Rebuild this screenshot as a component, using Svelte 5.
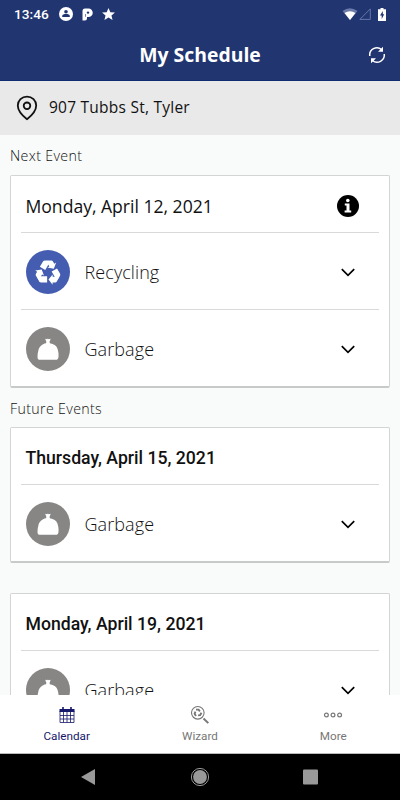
<script lang="ts">
	type Kind = 'recycling' | 'garbage';

	const sections: {
		title?: string;
		date: string;
		next?: boolean;
		pickups: { kind: Kind; label: string }[];
	}[] = [
		{
			title: 'Next Event',
			date: 'Monday, April 12, 2021',
			next: true,
			pickups: [
				{ kind: 'recycling', label: 'Recycling' },
				{ kind: 'garbage', label: 'Garbage' }
			]
		},
		{
			title: 'Future Events',
			date: 'Thursday, April 15, 2021',
			pickups: [{ kind: 'garbage', label: 'Garbage' }]
		},
		{
			date: 'Monday, April 19, 2021',
			pickups: [{ kind: 'garbage', label: 'Garbage' }]
		}
	];

	const tabs = ['Calendar', 'Wizard', 'More'];
	let active = $state('Calendar');
</script>

<div class="screen">
	<header>
		<div class="status">
			<span class="time">13:46</span>
			<svg class="person" viewBox="0 0 14 14" width="14" height="14">
				<circle cx="7" cy="7" r="7" fill="#fff" />
				<circle cx="7" cy="4.8" r="1.8" fill="#213571" />
				<path d="M3.2 10V9C3.2 7.5 5 7 7 7s3.800.5 3.800 2v1z" fill="#213571" />
			</svg>
			<svg class="parking" viewBox="0 0 11 13" width="11" height="13">
				<path
					d="M.5 6V3Q.5.500 3 .5H6.500A4.200 4.200 0 0 1 6.500 9H5V10.500A2 2 0 0 1 3 12.500H.5z"
					fill="#fff"
				/>
				<path d="M3.500 8.800V6" fill="none" stroke="#213571" stroke-width=".6" />
				<circle cx="6" cy="4.600" r="1.200" fill="#213571" />
			</svg>
			<svg class="star" viewBox="0 0 14 13" width="13" height="12">
				<path d="M7 0l2 4.500 5 .4-3.800 3.200L11.400 13 7 10.400 2.600 13l1.200-4.900L0 4.900l5-.4z" fill="#fff" />
			</svg>
			<span class="spacer"></span>
			<svg class="wifi" viewBox="0 0 16 12" width="16" height="12">
				<path d="M.5 3Q8-2.600 15.500 3L8 12z" fill="#6b7aa6" />
				<path d="M2.500 5Q8 1.300 13.500 5L8 12z" fill="#fff" />
			</svg>
			<svg class="signal" viewBox="0 0 12 12" width="12" height="12">
				<path d="M11.300.9v10.500H.9z" fill="none" stroke="#6577a8" />
			</svg>
			<svg class="battery" viewBox="0 0 8 13" width="8" height="13">
				<path d="M2.500 0h3v1.200H8V13H0V1.200h2.500z" fill="#fff" />
				<path d="M4.800 3L2 7.500h1.700V11L6.200 6.300H4.800z" fill="#213571" />
			</svg>
		</div>
		<div class="bar">
			<h1>My Schedule</h1>
			<button class="refresh" aria-label="Refresh">
				<svg viewBox="0 0 18 18" width="18" height="18">
					<g fill="none" stroke="#fff" stroke-width="1.500">
						<path d="M1.800 10A7.200 7.200 0 0 1 13.600 3.500" />
						<path d="M16.200 8A7.200 7.200 0 0 1 4.400 14.500" />
					</g>
					<path d="M15 .8v5h-5zM3 17.200v-5h5z" fill="#fff" />
				</svg>
			</button>
		</div>
	</header>

	<div class="address">
		<svg viewBox="0 0 22 26" width="22" height="26">
			<path
				d="M11 24.200C7.500 21.500 1.800 16.500 1.800 10.500a9.200 8.900 0 0 1 18.400 0c0 6-5.700 11-9.200 13.700z"
				fill="none"
				stroke="#111"
				stroke-width="1.800"
			/>
			<circle cx="11" cy="10.800" r="3.300" fill="none" stroke="#111" stroke-width="1.800" />
		</svg>
		<span>907 Tubbs St, Tyler</span>
	</div>

	<main>
		{#each sections as section}
			{#if section.title}
				<h2>{section.title}</h2>
			{:else}
				<div class="gap"></div>
			{/if}
			<section class="card" class:next={section.next}>
				<div class="date">
					<h3>{section.date}</h3>
					{#if section.next}
						<svg class="info" viewBox="0 0 22 22" width="22" height="22">
							<circle cx="11" cy="11" r="11" fill="#000" />
							<circle cx="10.800" cy="5.500" r="1.800" fill="#fff" />
							<path d="M7.800 8.500h4.700v7h1.700v2H7.600v-2h1.900v-5H7.800z" fill="#fff" />
						</svg>
					{/if}
				</div>
				{#each section.pickups as pickup}
					<div class="pickup">
						<span class="badge {pickup.kind}">
							{#if pickup.kind === 'recycling'}
								<svg viewBox="-15 -15 30 30" width="30" height="30">
									{#each [0, 120, 240] as angle}
										<g transform="rotate({angle} 0 .6)" fill="#fff">
											<path d="M-11.300 4.300H-.9V10.500H-6.800Q-8.200 10.500-8.900 9.300z" />
											<path d="M.5 7.600L4.600 2.600v2.200H11.400L8.800 9.400Q8.200 10.500 7.200 10.500H4.600v2.200z" />
										</g>
									{/each}
								</svg>
							{:else}
								<svg viewBox="0 0 24 24" width="24" height="24">
									<path
										d="M9.200 1.800l2 .5.700-.8.800.8 2-.5-1.200 3.200.4 1.200c3.700.7 6.600 2.300 7.500 5.300 1 2.500 1.500 6.700 1 9-.3 1.600-1.100 2.300-2.700 2.300H4.200c-1.800 0-2.700-.9-2.700-2.600.1-2.200.1-4.500.8-6.300.4-3.600 3.700-7.100 7.700-7.700l.4-1.200z"
										fill="#fff"
									/>
								</svg>
							{/if}
						</span>
						<span class="label">{pickup.label}</span>
						<svg class="chevron" viewBox="0 0 14 9" width="14" height="9">
							<path d="M.8 1.200L7 7.400l6.200-6.200" fill="none" stroke="#000" stroke-width="1.700" />
						</svg>
					</div>
				{/each}
			</section>
		{/each}
	</main>

	<nav class="tabs">
		{#each tabs as tab}
			<button class:active={active === tab} onclick={() => (active = tab)}>
				<svg viewBox="0 0 20 20" width="20" height="20" fill="none" stroke="currentColor">
					{#if tab === 'Calendar'}
						<path
							d="M3 6v11.500h14V6M6.500 6v11.500M10 6v11.500M13.500 6v11.500M3 10.500h14M3 14h14"
							stroke-width=".8"
						/>
						<path d="M2.500 5.500h15" stroke-width="3" />
						<path d="M6 2v3M14 2v3" stroke-width="1.600" />
					{:else if tab === 'Wizard'}
						<circle cx="7.800" cy="7.800" r="6.300" stroke-width="1.100" />
						<path d="M13.500 13.500l4.800 4.600" stroke-width="2" />
						{#each [0, 120, 240] as angle}
							<path
								d="M6 4.600h2.600l1.300 1.700"
								stroke-width="1.900"
								transform="rotate({angle} 7.800 7.800)"
							/>
						{/each}
					{:else}
						<circle cx="3.400" cy="10" r="1.900" stroke-width="1.200" />
						<circle cx="10" cy="10" r="1.900" stroke-width="1.200" />
						<circle cx="16.600" cy="10" r="1.900" stroke-width="1.200" />
					{/if}
				</svg>
				<span>{tab}</span>
			</button>
		{/each}
	</nav>

	<div class="system">
		<svg viewBox="0 0 20 20" width="20" height="20">
			<path d="M1 10L15 2v16z" fill="#999" />
		</svg>
		<svg viewBox="0 0 20 20" width="20" height="20">
			<circle cx="10" cy="10" r="8.600" fill="none" stroke="#999" />
			<circle cx="10" cy="10" r="6.900" fill="#999" />
		</svg>
		<svg viewBox="0 0 20 20" width="20" height="20">
			<rect x="3" y="2.500" width="15" height="15" rx="1" fill="#999" />
		</svg>
	</div>
</div>

<style>
	:global(body) {
		margin: 0;
	}

	.screen {
		display: flex;
		flex-direction: column;
		width: 400px;
		height: 800px;
		overflow: hidden;
		background: #f9fbfa;
		color: #111;
		font-family: 'Open Sans', sans-serif;
	}

	h1,
	h2,
	h3 {
		margin: 0;
	}

	button {
		padding: 0;
		border: 0;
		background: none;
		font: inherit;
	}

	svg {
		display: block;
		flex: none;
	}

	header {
		flex: none;
		box-sizing: border-box;
		height: 81px;
		background: #213571;
		border-bottom: 1px solid #0f2c70;
		color: #fff;
	}

	.status {
		display: flex;
		align-items: center;
		height: 28px;
		padding: 0 14px;
	}

	.time {
		width: 45px;
		font: 500 13.700px/28px Roboto, sans-serif;
	}

	.parking {
		margin-left: 9px;
	}

	.star {
		margin-left: 9px;
	}

	.spacer {
		flex: 1;
	}

	.signal {
		margin-left: 1px;
	}

	.battery {
		margin-left: 7px;
	}

	.bar {
		display: grid;
		grid-template-columns: 32px 1fr 32px;
		align-items: center;
		height: 53px;
	}

	h1 {
		grid-column: 2;
		text-align: center;
		font-size: 19.400px;
		font-weight: 700;
		line-height: 54px;
	}

	.address {
		flex: none;
		display: flex;
		align-items: center;
		gap: 11px;
		height: 54px;
		padding-left: 16px;
		background: #e9e9e9;
		font-size: 15.500px;
		letter-spacing: 0.240px;
	}

	.address span {
		margin-top: -2px;
	}

	main {
		flex: 1;
		min-height: 0;
		overflow: hidden;
		padding: 0 10px;
	}

	h2 {
		height: 40px;
		font-size: 14.200px;
		font-weight: 300;
		line-height: 41px;
		letter-spacing: 0.350px;
	}

	.card + h2 {
		height: 39px;
	}

	.gap {
		height: 30px;
	}

	.card {
		box-sizing: border-box;
		padding: 0 10px;
		border: 1px solid #d3d5d4;
		border-bottom: 2px solid #c8caca;
		border-radius: 2px;
		background: #fff;
	}

	.date {
		display: flex;
		align-items: center;
		justify-content: space-between;
		height: 56px;
		padding: 3px 20.500px 0 4.500px;
		box-sizing: border-box;
	}

	h3 {
		font: 500 17.650px/30px Roboto, sans-serif;
	}

	.next h3 {
		font: 400 17.600px/30px 'Open Sans', sans-serif;
		letter-spacing: -0.020px;
	}

	.pickup {
		display: flex;
		align-items: center;
		box-sizing: border-box;
		height: 77px;
		padding: 2px 24.500px 0 4.500px;
		border-top: 1px solid #d9d9d9;
	}

	.badge {
		display: grid;
		place-items: center;
		width: 44px;
		height: 44px;
		border-radius: 50%;
		background: #878685;
	}

	.badge.recycling {
		background: #455db0;
	}

	.label {
		flex: 1;
		margin-left: 15px;
		font-size: 18px;
		font-weight: 300;
		letter-spacing: 0.080px;
	}

	.tabs {
		flex: none;
		display: grid;
		grid-template-columns: repeat(3, 1fr);
		box-sizing: border-box;
		height: 59px;
		border-bottom: 1px solid #bbb;
		background: #fff;
	}

	.tabs button {
		display: flex;
		flex-direction: column;
		align-items: center;
		padding-top: 10px;
		color: #777;
		font: 400 11.700px/16px Roboto, sans-serif;
	}

	.tabs button span {
		margin-top: 3px;
	}

	.tabs .active {
		color: #15186b;
	}

	.system {
		flex: none;
		display: flex;
		align-items: center;
		justify-content: space-between;
		height: 46px;
		padding: 0 80px;
		background: #000;
	}
</style>
